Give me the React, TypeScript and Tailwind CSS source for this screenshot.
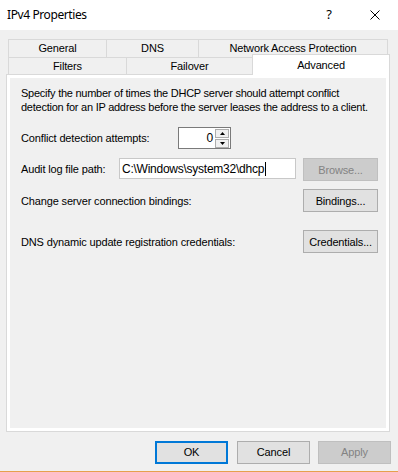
import React from 'react';

const font = { fontFamily: '"Liberation Sans", Arial, sans-serif' };

function WinButton({ label, disabled, primary, w = 'w-[75px]' }: { label: string; disabled?: boolean; primary?: boolean; w?: string }) {
  return (
    <div
      className={`${w} h-[23px] flex items-center justify-center text-[11px] tracking-[-0.15px] ${
        primary
          ? 'border-2 border-[#0078d7] bg-[#e1e1e1] text-black'
          : disabled
          ? 'border border-[#bfbfbf] bg-[#cccccc] text-[#838383]'
          : 'border border-[#adadad] bg-[#e1e1e1] text-black'
      }`}
    >
      {label}
    </div>
  );
}

export default function App() {
  return (
    <div className="w-[398px] h-[472px] bg-[#f0f0f0] flex flex-col border-b border-[#e6a04e] overflow-hidden" style={font}>
      {/* title bar */}
      <div className="h-[30px] bg-white flex items-center pl-[7px] shrink-0">
        <span className="text-[12px] tracking-[-0.4px] text-black" style={{ fontFamily: '"Noto Sans", "Open Sans", sans-serif' }}>IPv4 Properties</span>
        <span className="ml-auto mr-[38px] text-[13px] text-black" style={{ fontFamily: '"Noto Sans", sans-serif' }}>?</span>
        <svg width="10" height="10" viewBox="0 0 10 10" className="mr-[18px]">
          <path d="M0.5 0.5 L9.5 9.5 M9.5 0.5 L0.5 9.5" stroke="#000" strokeWidth="1" />
        </svg>
      </div>

      <div className="flex-1 flex flex-col px-[6px] pt-[9px]">
        {/* tab row 1 */}
        <div className="flex h-[18px] ml-[2px] text-[11px] tracking-[-0.15px] text-black">
          <div className="w-[98px] border-l border-t border-[#d9d9d9] flex items-center justify-center">General</div>
          <div className="w-[92px] border-l border-t border-[#d9d9d9] flex items-center justify-center">DNS</div>
          <div className="w-[190px] border-l border-t border-r border-[#d9d9d9] flex items-center justify-center">Network Access Protection</div>
        </div>
        {/* tab row 2 */}
        <div className="flex items-end h-[17px] ml-[2px] text-[11px] tracking-[-0.15px] text-black">
          <div className="w-[118px] h-[17px] border-l border-t border-[#d9d9d9] flex items-center justify-center">Filters</div>
          <div className="w-[126px] h-[17px] border-l border-t border-[#d9d9d9] flex items-center justify-center">Failover</div>
          <div className="relative z-10 w-[138px] h-[21px] -mb-[1px] bg-white border-l border-t border-r border-[#d9d9d9] flex items-start justify-center pt-[2px]">Advanced</div>
        </div>

        {/* panel */}
        <div className="w-[384px] h-[358px] border border-[#d9d9d9] bg-white p-[3px] flex">
          <div className="flex-1 bg-[#f0f0f0] pl-[11px] pt-[8px] text-[11px] tracking-[-0.15px] text-black leading-[14px]">
            <p className="whitespace-nowrap tracking-[-0.25px]">
              Specify the number of times the DHCP server should attempt conflict
              <br />
              detection for an IP address before the server leases the address to a client.
            </p>

            <div className="flex items-center mt-[13px] h-[22px]">
              <span className="w-[157px]">Conflict detection attempts:</span>
              <div className="w-[53px] h-[22px] bg-white border border-[#7a7a7a] flex items-center justify-end pr-[1px]">
                <span className="text-[12px] mr-[2px]">0</span>
                <div className="flex flex-col gap-[1px]">
                  <div className="w-[14px] h-[9px] bg-[#f0f0f0] border border-[#adadad] flex items-center justify-center">
                    <svg width="5" height="3" viewBox="0 0 5 3"><path d="M2.5 0 L5 3 L0 3 Z" fill="#000" /></svg>
                  </div>
                  <div className="w-[14px] h-[9px] bg-[#f0f0f0] border border-[#adadad] flex items-center justify-center">
                    <svg width="5" height="3" viewBox="0 0 5 3"><path d="M0 0 L5 0 L2.5 3 Z" fill="#000" /></svg>
                  </div>
                </div>
              </div>
            </div>

            <div className="flex items-start mt-[9px]">
              <span className="w-[98px] h-[21px] flex items-center">Audit log file path:</span>
              <div className="w-[177px] h-[21px] bg-white border border-[#c8c8c8] flex items-center pl-[2px] text-[12px] tracking-[-0.25px]">
                C:\Windows\system32\dhcp
                <span className="inline-block w-[1px] h-[14px] bg-black ml-[1px]" />
              </div>
              <div className="ml-[7px]">
                <WinButton label="Browse..." disabled />
              </div>
            </div>

            <div className="flex items-center mt-[8px] h-[23px]">
              <span>Change server connection bindings:</span>
              <div className="ml-auto mr-[8px]">
                <WinButton label="Bindings..." />
              </div>
            </div>

            <div className="flex items-center mt-[18px] h-[23px]">
              <span>DNS dynamic update registration credentials:</span>
              <div className="ml-auto mr-[8px]">
                <WinButton label="Credentials..." />
              </div>
            </div>
          </div>
        </div>

        {/* bottom buttons */}
        <div className="flex justify-end mt-[9px] pr-[1px]">
          <WinButton label="OK" primary w="w-[73px]" />
          <div className="ml-[9px]">
            <WinButton label="Cancel" w="w-[73px]" />
          </div>
          <div className="ml-[8px]">
            <WinButton label="Apply" disabled w="w-[73px]" />
          </div>
        </div>
      </div>
    </div>
  );
}
